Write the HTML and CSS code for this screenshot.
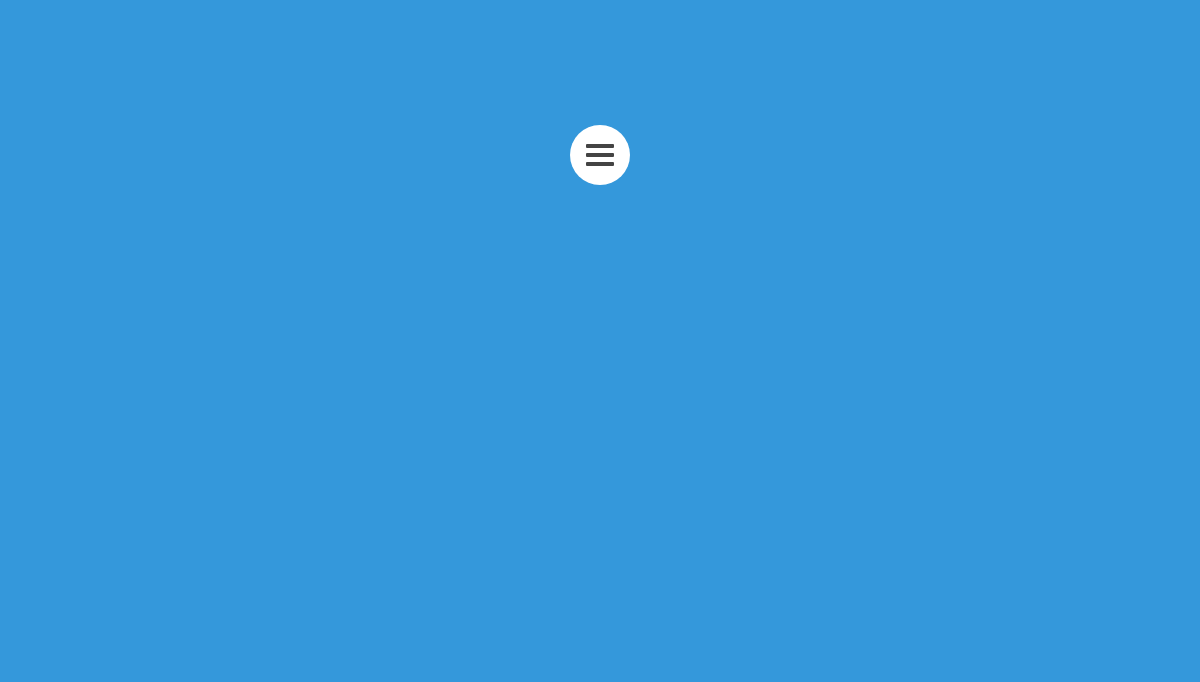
FILE: index.html
```html
<!DOCTYPE html>
<html lang="en">
<head>
<meta charset="utf-8">
<title>Menu</title>
<link rel="stylesheet" href="styles.css">
</head>
<body>
<div class="page">
  <button class="menu-btn" aria-label="Menu">
    <span class="bar"></span>
    <span class="bar"></span>
    <span class="bar"></span>
  </button>
</div>
</body>
</html>
```

FILE: styles.css
```css
html, body {
  margin: 0;
  padding: 0;
  height: 100%;
  background: #3498db;
  font-family: "Liberation Sans", Arial, sans-serif;
}
.page {
  display: flex;
  justify-content: center;
  padding-top: 125px;
}
.menu-btn {
  width: 60px;
  height: 60px;
  border: none;
  border-radius: 50%;
  background: #ffffff;
  padding: 0 0 1px 0;
  display: flex;
  flex-direction: column;
  align-items: center;
  justify-content: center;
  gap: 5px;
  cursor: pointer;
}
.bar {
  display: block;
  width: 28px;
  height: 4px;
  border-radius: 1px;
  background: #444444;
}
```
